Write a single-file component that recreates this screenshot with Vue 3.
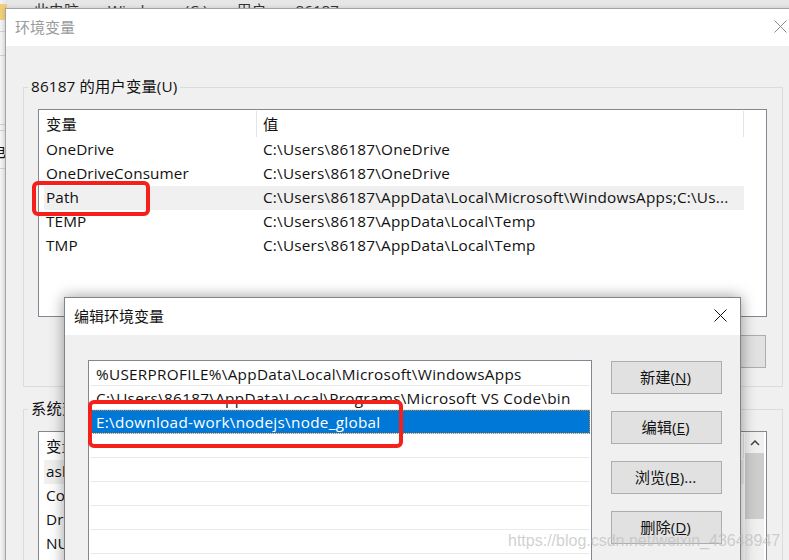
<script setup>
const userVars = [
  { name: 'OneDrive', value: 'C:\\Users\\86187\\OneDrive' },
  { name: 'OneDriveConsumer', value: 'C:\\Users\\86187\\OneDrive' },
  { name: 'Path', value: 'C:\\Users\\86187\\AppData\\Local\\Microsoft\\WindowsApps;C:\\Us...', active: true },
  { name: 'TEMP', value: 'C:\\Users\\86187\\AppData\\Local\\Temp' },
  { name: 'TMP', value: 'C:\\Users\\86187\\AppData\\Local\\Temp' }
]
const sysVars = [
  { name: 'asl.log', value: 'Destination=file', active: true },
  { name: 'ComSpec', value: 'C:\\Windows\\system32\\cmd.exe' },
  { name: 'DriverData', value: 'C:\\Windows\\System32\\Drivers\\DriverData' },
  { name: 'NUMBER_OF_PROCESSORS', value: '8' }
]
const paths = [
  '%USERPROFILE%\\AppData\\Local\\Microsoft\\WindowsApps',
  'C:\\Users\\86187\\AppData\\Local\\Programs\\Microsoft VS Code\\bin',
  'E:\\download-work\\nodejs\\node_global',
  '', '', '', '', ''
]
const buttons = [
  { label: '新建(', key: 'N', tail: ')' },
  { label: '编辑(', key: 'E', tail: ')' },
  { label: '浏览(', key: 'B', tail: ')...' },
  { label: '删除(', key: 'D', tail: ')' }
]
</script>

<template>
  <div class="desktop">
    <div class="explorer">
      <div class="crumbs">› 此电脑 › Windows (C:) › 用户 › 86187</div>
      <div class="folder"></div>
      <div class="side-line l1"></div>
      <div class="side-line l2"></div>
      <div class="side-line l3"></div>
      <div class="side-line l4"></div>
      <div class="side-line l5"></div>
      <div class="side-char">电</div>
    </div>

    <section class="window env">
      <header class="titlebar faded">
        <span>环境变量</span>
        <svg class="close" width="13" height="13" viewBox="0 0 13 13"><path d="M.5.5l12 12M12.5.5l-12 12" stroke="#8a8a8a" fill="none"/></svg>
      </header>
      <div class="env-body">
        <div class="group user-group">
          <span class="legend">86187 的用户变量(U)</span>
          <div class="listbox user-list">
            <div class="head">
              <span class="c1">变量</span>
              <span class="c2">值</span>
            </div>
            <div v-for="r in userVars" :key="r.name" class="row" :class="{ active: r.active }">
              <span class="c1">{{ r.name }}</span>
              <span class="c2">{{ r.value }}</span>
            </div>
          </div>
          <div class="under-button"></div>
        </div>
        <div class="group sys-group">
          <span class="legend">系统变量(S)</span>
          <div class="listbox sys-list">
            <div class="head">
              <span class="c1">变量</span>
              <span class="c2">值</span>
            </div>
            <div v-for="r in sysVars" :key="r.name" class="row" :class="{ active: r.active }">
              <span class="c1">{{ r.name }}</span>
              <span class="c2">{{ r.value }}</span>
            </div>
            <div class="scrollbar">
              <svg width="10" height="6" viewBox="0 0 10 6"><path d="M1 5l4-4 4 4" stroke="#444" stroke-width="1.5" fill="none"/></svg>
              <div class="thumb"></div>
            </div>
          </div>
        </div>
      </div>
    </section>

    <section class="window edit">
      <header class="titlebar">
        <span>编辑环境变量</span>
        <svg class="close" width="13" height="13" viewBox="0 0 13 13"><path d="M.5.5l12 12M12.5.5l-12 12" stroke="#111" fill="none"/></svg>
      </header>
      <div class="edit-body">
        <div class="path-list">
          <div v-for="(p, i) in paths" :key="i" class="path-row" :class="{ selected: i === 2 }">{{ p }}</div>
        </div>
        <div class="actions">
          <button v-for="b in buttons" :key="b.key" type="button" class="btn">{{ b.label }}<u>{{ b.key }}</u>{{ b.tail }}</button>
        </div>
      </div>
    </section>

    <div class="mark mark-path"></div>
    <div class="mark mark-global"></div>
    <div class="watermark">https://blog.csdn.net/weixin_43648947</div>
  </div>
</template>

<style>
html, body { margin: 0; overflow: hidden; background: #fff; }
</style>

<style scoped>
.desktop {
  position: relative;
  width: 789px;
  height: 560px;
  overflow: hidden;
  background: #f6f6f6;
  font-family: "Open Sans", "Noto Sans CJK SC", sans-serif;
  font-size: 15.3px;
  letter-spacing: 0.15px;
  color: #111;
}
.explorer { position: absolute; inset: 0; background: linear-gradient(to right, #f4f4f4, #e6e6e6 6px); }
.crumbs {
  position: absolute;
  left: 17px;
  top: 0;
  font-size: 15px;
  line-height: 20px;
  color: #333;
  word-spacing: 8px;
  white-space: nowrap;
}
.folder { position: absolute; left: 0; top: 4px; width: 7px; height: 16px; background: #f0cd78; }
.side-line { position: absolute; left: 0; width: 6px; height: 1px; background: #cfcfcf; }
.l1 { top: 31px; }
.l2 { top: 55px; }
.l3 { top: 124px; }
.l4 { top: 130px; }
.l5 { top: 168px; }
.side-char { position: absolute; left: -9px; top: 141px; font-size: 15px; line-height: 20px; }

.window { position: absolute; box-sizing: border-box; background: #f0f0f0; }
.env {
  left: 5px;
  top: 8px;
  width: 810px;
  height: 580px;
  border: 1px solid #a3a3a3;
  box-shadow: 0 0 4px rgba(0, 0, 0, 0.15);
}
.edit {
  left: 64px;
  top: 297px;
  width: 677px;
  height: 290px;
  border: 1px solid #7f8489;
  box-shadow: 0 0 14px rgba(0, 0, 0, 0.4);
}
.titlebar {
  height: 37px;
  box-sizing: border-box;
  background: #fff;
  display: flex;
  align-items: center;
  justify-content: space-between;
  padding: 0 13px 2px 9px;
  font-size: 15px;
  letter-spacing: 0;
}
.faded { color: #9b9b9b; padding-right: 27px; }

.env-body { padding-top: 41px; padding-left: 17px; }
.group { position: relative; box-sizing: border-box; width: 760px; border: 1px solid #dcdcdc; padding: 21px 14px 0; }
.user-group { height: 300px; }
.sys-group { height: 200px; margin-top: 22px; }
.legend { position: absolute; left: 4px; top: -12px; padding: 0 3px; background: #f0f0f0; line-height: 20px; white-space: nowrap; }
.listbox { position: relative; box-sizing: border-box; width: 729px; background: #fff; border: 1px solid #828790; padding: 0 0 0 5px; }
.user-list { height: 208px; }
.sys-list { height: 200px; }
.head { display: flex; height: 28px; align-items: flex-start; }
.head .c1, .head .c2 { border-right: 1px solid #e5e5e5; height: 26px; line-height: 26px; margin-top: 1px; }
.head .c1 { width: 213px; }
.head .c2 { width: 487px; padding-left: 6px; }
.row { display: flex; height: 24px; line-height: 22px; width: 700px; white-space: nowrap; }
.row.active { background: #f0f0f0; }
.c1 { width: 212px; padding-left: 2px; box-sizing: border-box; flex: none; overflow: hidden; letter-spacing: 0.1px; }
.c2 { width: 488px; padding-left: 7px; box-sizing: border-box; flex: none; overflow: hidden; letter-spacing: 0.22px; }
.under-button { position: absolute; right: 16px; top: 247px; width: 200px; height: 33px; box-sizing: border-box; background: #e1e1e1; border: 1px solid #adadad; }
.scrollbar { position: absolute; right: 2px; top: 0; bottom: 0; width: 19px; background: #f0f0f0; display: flex; flex-direction: column; align-items: center; padding-top: 8px; box-sizing: border-box; }
.thumb { width: 100%; height: 66px; margin-top: 7px; background: #cdcdcd; flex: none; }

.edit-body { display: flex; padding: 25px 18px 0 23px; gap: 19px; }
.path-list { box-sizing: border-box; width: 504px; height: 260px; flex: none; background: #fff; border: 1px solid #828790; padding: 1px; }
.path-row { height: 24px; line-height: 24px; box-sizing: border-box; border-bottom: 1px solid #eaeaea; padding-left: 6px; white-space: nowrap; letter-spacing: 0.29px; }
.path-row.selected { background: #0078d7; color: #fff; outline: 1px dotted #c9842f; outline-offset: -1px; }
.actions { display: flex; flex-direction: column; gap: 17px; padding-top: 1px; }
.btn { width: 111px; height: 33px; box-sizing: border-box; background: #e1e1e1; border: 1px solid #adadad; font: inherit; letter-spacing: 0; color: inherit; padding: 0 2px 3px 0; }

.mark { position: absolute; box-sizing: border-box; border: 4px solid #f5201a; border-radius: 6px; }
.mark-path { left: 32px; top: 181px; width: 118px; height: 35px; }
.mark-global { left: 88px; top: 400px; width: 315px; height: 48px; }
.watermark {
  position: absolute;
  left: 508px;
  top: 530px;
  font-family: "Liberation Sans", sans-serif;
  font-size: 16px;
  letter-spacing: 0;
  line-height: 22px;
  color: rgba(190, 190, 190, 0.72);
  white-space: nowrap;
}
</style>
